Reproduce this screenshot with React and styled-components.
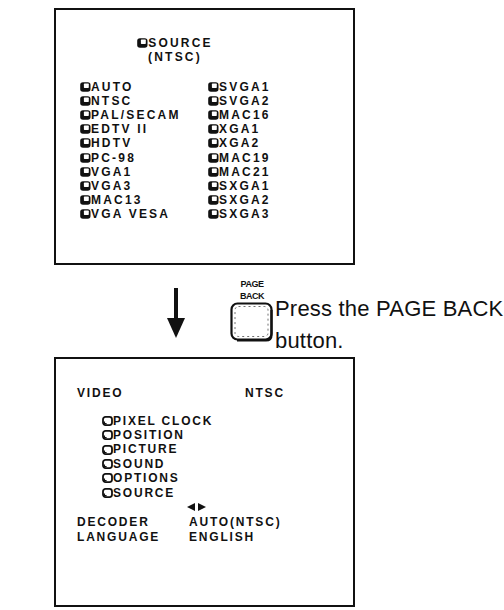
import React from 'react';
import styled, { createGlobalStyle } from 'styled-components';

const GlobalStyle = createGlobalStyle`
  html, body {
    margin: 0;
    padding: 0;
    background: #fff;
  }
  body {
    font-family: "Liberation Sans", Arial, sans-serif;
    color: #111;
  }
`;

const leftSources = ['AUTO', 'NTSC', 'PAL/SECAM', 'EDTV II', 'HDTV', 'PC-98', 'VGA1', 'VGA3', 'MAC13', 'VGA VESA'];
const rightSources = ['SVGA1', 'SVGA2', 'MAC16', 'XGA1', 'XGA2', 'MAC19', 'MAC21', 'SXGA1', 'SXGA2', 'SXGA3'];
const menuItems = ['PIXEL CLOCK', 'POSITION', 'PICTURE', 'SOUND', 'OPTIONS', 'SOURCE'];

// filled key glyph used on the source list
const KeyIcon = () => (
  <svg width="11" height="10" viewBox="0 0 11 10">
    <rect x="0.2" y="0.2" width="10.3" height="9.6" rx="2.8" fill="#111" />
    <rect x="3.9" y="1.6" width="4.9" height="4.3" rx="0.6" fill="#fff" />
  </svg>
);

// outline key glyph used on the main menu
const OutlineIcon = () => (
  <svg width="11" height="10" viewBox="0 0 11 10">
    <rect x="1" y="0.9" width="9" height="8.2" rx="2.5" fill="#fff" stroke="#111" strokeWidth="1.8" />
    <path d="M2.4 5.6 V7.7 H4.6" fill="none" stroke="#111" strokeWidth="1.3" />
  </svg>
);

const DownArrow = () => (
  <svg width="18" height="50" viewBox="0 0 18 50">
    <rect x="7" y="0" width="4" height="31" fill="#111" />
    <polygon points="0,30 18,30 9,50" fill="#111" />
  </svg>
);

const PageBackKey = () => (
  <svg width="44" height="40" viewBox="0 0 44 40">
    <rect x="1.5" y="1.5" width="40" height="36" rx="6" fill="#fff" stroke="#111" strokeWidth="2.2" />
    <path d="M41.5 8 V33 Q41.5 38.5 36 38.5 H7" fill="none" stroke="#111" strokeWidth="2.2" />
    <rect x="5" y="4.5" width="33" height="30" rx="3.5" fill="none" stroke="#111" strokeWidth="0.6" strokeDasharray="2 3" />
  </svg>
);

const LeftRight = () => (
  <svg width="20" height="8" viewBox="0 0 20 8">
    <polygon points="0,4 8,0 8,8" fill="#111" />
    <polygon points="11,0 19,4 11,8" fill="#111" />
  </svg>
);

const Page = styled.div`
  width: 504px;
  height: 610px;
  box-sizing: border-box;
  padding: 8px 0 0 54px;
  display: flex;
  flex-direction: column;
  overflow: hidden;
`;

const Screen = styled.div`
  width: 301px;
  height: ${(p) => p.$height}px;
  box-sizing: border-box;
  border: 2px solid #111;
  padding: ${(p) => p.$pad};
  font-size: 12px;
  font-weight: bold;
  letter-spacing: ${(p) => p.$spacing}px;
  display: flex;
  flex-direction: column;
`;

const Heading = styled.div`
  width: 190px;
  line-height: 14px;
  display: flex;
  flex-direction: column;
  align-items: center;
  margin-bottom: 16px;
`;

const Line = styled.div`
  display: flex;
  align-items: center;
  white-space: nowrap;
  line-height: ${(p) => p.$lh || 14}px;
`;

const SourceGrid = styled.div`
  display: grid;
  grid-template-columns: 128px auto;
  grid-template-rows: repeat(10, 14.2px);
  grid-auto-flow: column;
`;

const Middle = styled.div`
  height: 92px;
  display: flex;
  align-items: flex-start;
`;

const ArrowWrap = styled.div`
  margin: 23px 0 0 113px;
  display: flex;
`;

const KeyGroup = styled.div`
  margin: 12.5px 0 0 45px;
  width: 44px;
  display: flex;
  flex-direction: column;
  align-items: center;
`;

const KeyLabel = styled.div`
  font-size: 9px;
  line-height: 12px;
  font-weight: bold;
  letter-spacing: -0.5px;
  text-align: center;
`;

const Instruction = styled.div`
  margin: 27.5px 0 0 1px;
  font-size: 22px;
  line-height: 32px;
  letter-spacing: 0.2px;
  white-space: nowrap;
`;

const HeaderRow = styled.div`
  display: grid;
  grid-template-columns: 168px auto;
  line-height: 14px;
`;

const Menu = styled.div`
  margin: 14px 0 0 25px;
  display: flex;
  flex-direction: column;
`;

const ArrowRow = styled.div`
  margin: 3px 0 0 110px;
  height: 8px;
  display: flex;
`;

const Settings = styled.div`
  margin-top: 3.6px;
  display: grid;
  grid-template-columns: 112px auto;
  grid-auto-rows: 15px;
  line-height: 15px;
  white-space: nowrap;
`;

export default function App() {
  return (
    <>
      <GlobalStyle />
      <Page>
        <Screen $height={257} $pad="25.6px 0 0 24px" $spacing={2.2}>
          <Heading>
            <Line>
              <KeyIcon />
              SOURCE
            </Line>
            <Line>(NTSC)</Line>
          </Heading>
          <SourceGrid>
            {[...leftSources, ...rightSources].map((name) => (
              <Line key={name} $lh={14.2}>
                <KeyIcon />
                {name}
              </Line>
            ))}
          </SourceGrid>
        </Screen>

        <Middle>
          <ArrowWrap>
            <DownArrow />
          </ArrowWrap>
          <KeyGroup>
            <KeyLabel>PAGE</KeyLabel>
            <KeyLabel>BACK</KeyLabel>
            <PageBackKey />
          </KeyGroup>
          <Instruction>
            <div>Press the PAGE BACK</div>
            <div>button.</div>
          </Instruction>
        </Middle>

        <Screen $height={250} $pad="26.6px 0 0 21px" $spacing={1.8}>
          <HeaderRow>
            <span>VIDEO</span>
            <span>NTSC</span>
          </HeaderRow>
          <Menu>
            {menuItems.map((item) => (
              <Line key={item} $lh={14.4}>
                <OutlineIcon />
                {item}
              </Line>
            ))}
          </Menu>
          <ArrowRow>
            <LeftRight />
          </ArrowRow>
          <Settings>
            <span>DECODER</span>
            <span>AUTO(NTSC)</span>
            <span>LANGUAGE</span>
            <span>ENGLISH</span>
          </Settings>
        </Screen>
      </Page>
    </>
  );
}
